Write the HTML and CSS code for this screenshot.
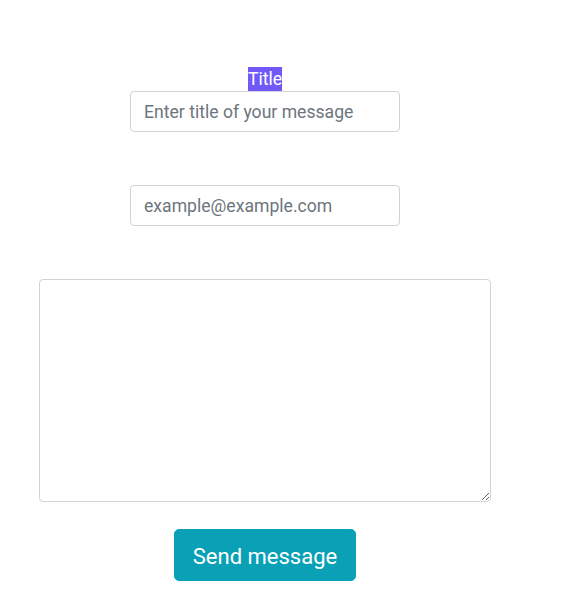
FILE: index.html
```html
<!DOCTYPE html>
<html lang="en">
<head>
<meta charset="utf-8">
<title>Message form</title>
<link rel="stylesheet" href="styles.css">
</head>
<body>
<form class="form">
  <label class="title-label" for="title">Title</label>
  <input class="field" id="title" type="text" placeholder="Enter title of your message">
  <input class="field email" id="email" type="email" placeholder="example@example.com">
  <textarea class="message" id="message"></textarea>
  <button class="send" type="button">Send message</button>
</form>
</body>
</html>
```
FILE: styles.css
```css
html, body {
  margin: 0;
  padding: 0;
  background: #ffffff;
}
body {
  font-family: Roboto, "Liberation Sans", sans-serif;
}
.form {
  width: 530px;
  display: flex;
  flex-direction: column;
  align-items: center;
  padding-top: 67px;
}
.title-label {
  display: block;
  background: #7059f7;
  color: #ffffff;
  font-size: 17.6px;
  line-height: 24px;
  height: 24px;
  padding: 0;
}
.field {
  box-sizing: border-box;
  width: 270px;
  height: 41px;
  border: 1px solid #ced4da;
  border-radius: 4px;
  padding: 0 13px;
  font-family: inherit;
  font-size: 17.6px;
  color: #495057;
  background: #fff;
  outline: none;
}
.field::placeholder {
  color: #6c757d;
  opacity: 1;
}
.email {
  margin-top: 53px;
}
.message {
  box-sizing: border-box;
  margin-top: 53px;
  width: 452px;
  height: 223px;
  border: 1px solid #ced4da;
  border-radius: 4px;
  font-family: inherit;
  font-size: 18px;
  outline: none;
  resize: both;
}
.send {
  box-sizing: border-box;
  margin-top: 27px;
  width: 182px;
  height: 52px;
  background: #0aa1b7;
  border: 1px solid #0aa1b7;
  border-radius: 5px;
  color: #ffffff;
  font-family: inherit;
  font-size: 22px;
  padding: 2px 0 0;
}
```
